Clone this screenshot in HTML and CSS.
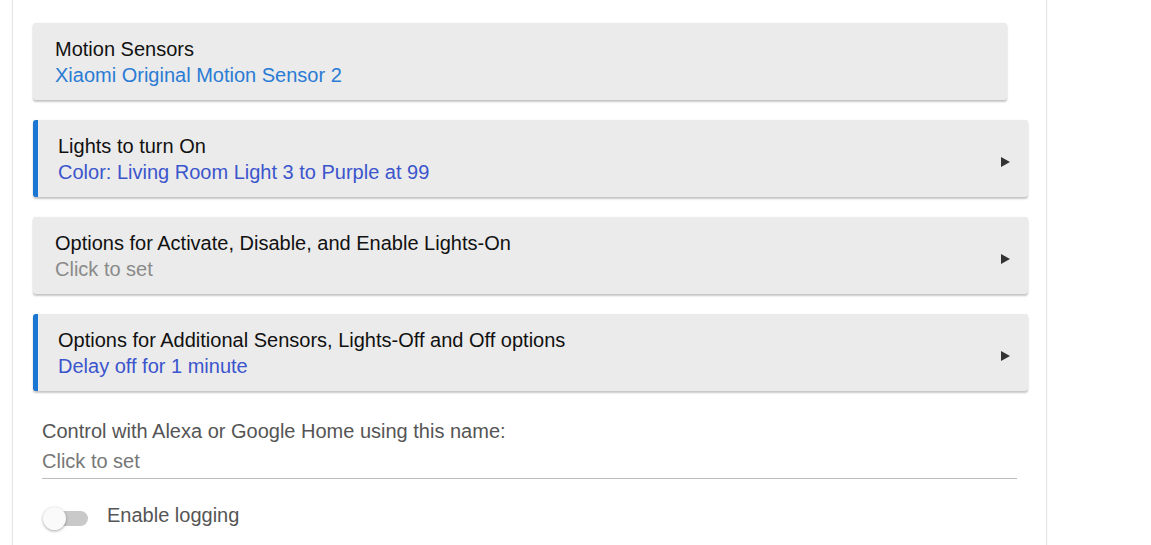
FILE: index.html
```html
<!DOCTYPE html>
<html>
<head>
<meta charset="utf-8">
<link rel="stylesheet" href="styles.css">
</head>
<body>
<div class="page">
  <div class="card card-narrow">
    <div class="card-text">
      <div class="title">Motion Sensors</div>
      <div class="sub sub-light">Xiaomi Original Motion Sensor 2</div>
    </div>
  </div>
  <div class="card card-active">
    <div class="card-text">
      <div class="title">Lights to turn On</div>
      <div class="sub sub-indigo">Color: Living Room Light 3 to Purple at 99</div>
    </div>
    <span class="arrow"></span>
  </div>
  <div class="card">
    <div class="card-text">
      <div class="title">Options for Activate, Disable, and Enable Lights-On</div>
      <div class="sub sub-grey">Click to set</div>
    </div>
    <span class="arrow"></span>
  </div>
  <div class="card card-active">
    <div class="card-text">
      <div class="title">Options for Additional Sensors, Lights-Off and Off options</div>
      <div class="sub sub-indigo">Delay off for 1 minute</div>
    </div>
    <span class="arrow"></span>
  </div>
  <div class="field">
    <div class="field-label">Control with Alexa or Google Home using this name:</div>
    <div class="field-input">Click to set</div>
  </div>
  <div class="toggle-row">
    <span class="toggle"><span class="knob"></span></span>
    <span class="toggle-label">Enable logging</span>
  </div>
</div>
</body>
</html>
```

FILE: styles.css
```css
html, body {
  margin: 0;
  padding: 0;
  background: #ffffff;
  font-family: "Liberation Sans", Arial, sans-serif;
}
.page {
  margin-left: 12px;
  width: 1035px;
  height: 560px;
  box-sizing: border-box;
  padding-top: 23px;
  border-left: 1px solid #e6e6e6;
  border-right: 1px solid #e6e6e6;
  box-shadow: 0 0 2px rgba(0,0,0,0.06);
}
.card {
  display: flex;
  align-items: center;
  height: 77px;
  box-sizing: border-box;
  margin: 0 18px 20px 20px;
  padding: 0 18px 0 22px;
  background: #ebebeb;
  border-radius: 3px;
  box-shadow: 0 2px 2px rgba(0,0,0,0.22), 0 0 1px rgba(0,0,0,0.12);
}
.card-narrow {
  margin-right: 39px;
}
.card-active {
  border-left: 5px solid #1976d2;
  padding-left: 20px;
}
.card-text {
  flex: 1;
  padding-top: 1px;
}
.title {
  font-size: 20px;
  line-height: 26px;
  color: #111;
}
.sub {
  font-size: 20px;
  line-height: 26px;
}
.sub-light { color: #2a7bd4; }
.sub-indigo { color: #3b55cd; }
.sub-grey { color: #8a8a8a; }
.arrow {
  width: 0;
  height: 0;
  border-top: 5.5px solid transparent;
  border-bottom: 5.5px solid transparent;
  border-left: 9px solid #333;
  margin-top: 6px;
}
.field {
  margin: 0 29px 0 29px;
}
.field-label {
  font-size: 20px;
  line-height: 30px;
  color: #555;
  padding-top: 5px;
}
.field-input {
  font-size: 20px;
  line-height: 30px;
  color: #777;
  border-bottom: 1.5px solid #bdbdbd;
  padding-bottom: 2px;
}
.toggle-row {
  display: flex;
  align-items: center;
  margin: 26px 0 0 30px;
}
.toggle {
  position: relative;
  width: 43px;
  height: 15px;
  border-radius: 8px;
  background: #c9c9c9;
  margin-left: 2px;
  margin-top: 4px;
}
.knob {
  position: absolute;
  left: -2px;
  top: -4px;
  width: 23px;
  height: 23px;
  border-radius: 50%;
  background: #fafafa;
  box-shadow: 0 1px 3px rgba(0,0,0,0.35);
}
.toggle-label {
  margin-left: 19px;
  font-size: 20px;
  color: #555;
  margin-top: -1px;
}
```
